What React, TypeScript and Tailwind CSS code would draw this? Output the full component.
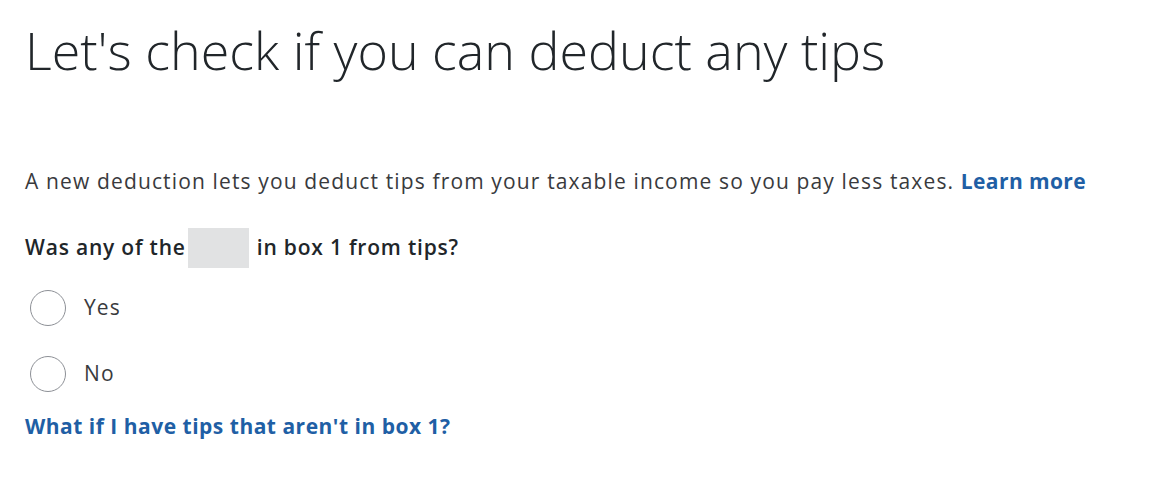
import React from "react";

function Radio({ label }: { label: string }) {
  return (
    <label className="flex h-[36px] items-center gap-[18px]">
      <span className="ml-[5px] inline-block h-[36px] w-[36px] rounded-full border border-[#8d9096] bg-white" />
      <span className="text-[21px] tracking-[1.1px] text-[#393a3d]">{label}</span>
    </label>
  );
}

export default function App() {
  return (
    <div className="flex min-h-[499px] w-full flex-col items-start bg-white pl-[25px] pt-[14px] font-['Open_Sans',sans-serif] text-[#393a3d]">
      <h1 className="text-[52px] font-light leading-[72px] text-[#21262a]">Let's check if you can deduct any tips</h1>
      <p className="mt-[80px] text-[21px] leading-[30px] tracking-[1.14px] text-[#393a3d]">
        A new deduction lets you deduct tips from your taxable income so you pay less taxes.{" "}
        <a className="font-bold tracking-[0.4px] text-[#1f5fa5]" href="#">Learn more</a>
      </p>
      <div className="mt-[32px] flex items-center text-[21px] font-semibold tracking-[0.8px] text-[#21262a]">
        <span>Was any of the</span>
        <span className="ml-[2px] mr-[8px] inline-block h-[40px] w-[61px] bg-[#e1e2e3]" />
        <span>in box 1 from tips?</span>
      </div>
      <div className="mt-[22px] flex flex-col gap-[30px]">
        <Radio label="Yes" />
        <Radio label="No" />
      </div>
      <a href="#" className="mt-[19px] block text-[21px] font-bold tracking-[0.5px] text-[#1f5fa5]">What if I have tips that aren't in box 1?</a>
    </div>
  );
}
